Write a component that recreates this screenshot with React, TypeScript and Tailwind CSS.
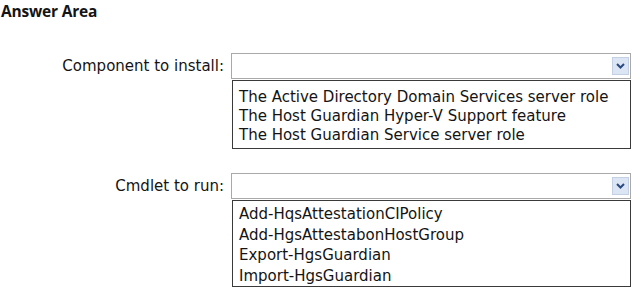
export default function App() {
  const rows = [
    {
      label: 'Component to install:',
      pad: 'pt-[7px] pb-[3px] leading-[19px]',
      options: [
        'The Active Directory Domain Services server role',
        'The Host Guardian Hyper-V Support feature',
        'The Host Guardian Service server role',
      ],
    },
    {
      label: 'Cmdlet to run:',
      pad: 'pt-[3px] pb-0 leading-[20.5px]',
      options: [
        'Add-HqsAttestationCIPolicy',
        'Add-HgsAttestabonHostGroup',
        'Export-HgsGuardian',
        'Import-HgsGuardian',
      ],
    },
  ]

  return (
    <div className="w-[633px] h-[293px] bg-white text-[#141414] pt-[2px]" style={{ fontFamily: '"DejaVu Sans", Verdana, sans-serif' }}>
      <div className="pl-[1px] text-[15.5px] font-bold leading-[18px] tracking-[-0.2px]" style={{ fontFamily: '"Open Sans", "DejaVu Sans", sans-serif' }}>
        Answer Area
      </div>

      <div className="mt-[33px] flex flex-col gap-[24px]">
        {rows.map((row) => (
          <div key={row.label} className="grid grid-cols-[231px_1fr] items-start">
            <div className="h-[26px] flex items-center justify-end pr-[7px] text-[15px]">
              {row.label}
            </div>
            <div className="pr-[2px]">
              <div className="h-[26px] border border-[#a9a9a9] bg-white flex items-center justify-end pr-[1px]">
                <div className="w-[17px] h-[18px] bg-[#dbe5f3] border border-[#c3d0e4] flex items-center justify-center">
                  <svg width="9" height="6" viewBox="0 0 9 6">
                    <path d="M1 1 L4.5 4.5 L8 1" fill="none" stroke="#2b4a80" strokeWidth="2" />
                  </svg>
                </div>
              </div>
              <div className={`mt-[1px] ml-[1px] border border-[#3a3a3a] bg-white px-[6px] ${row.pad} text-[15px]`}>
                {row.options.map((o) => (
                  <div key={o}>{o}</div>
                ))}
              </div>
            </div>
          </div>
        ))}
      </div>
    </div>
  )
}
